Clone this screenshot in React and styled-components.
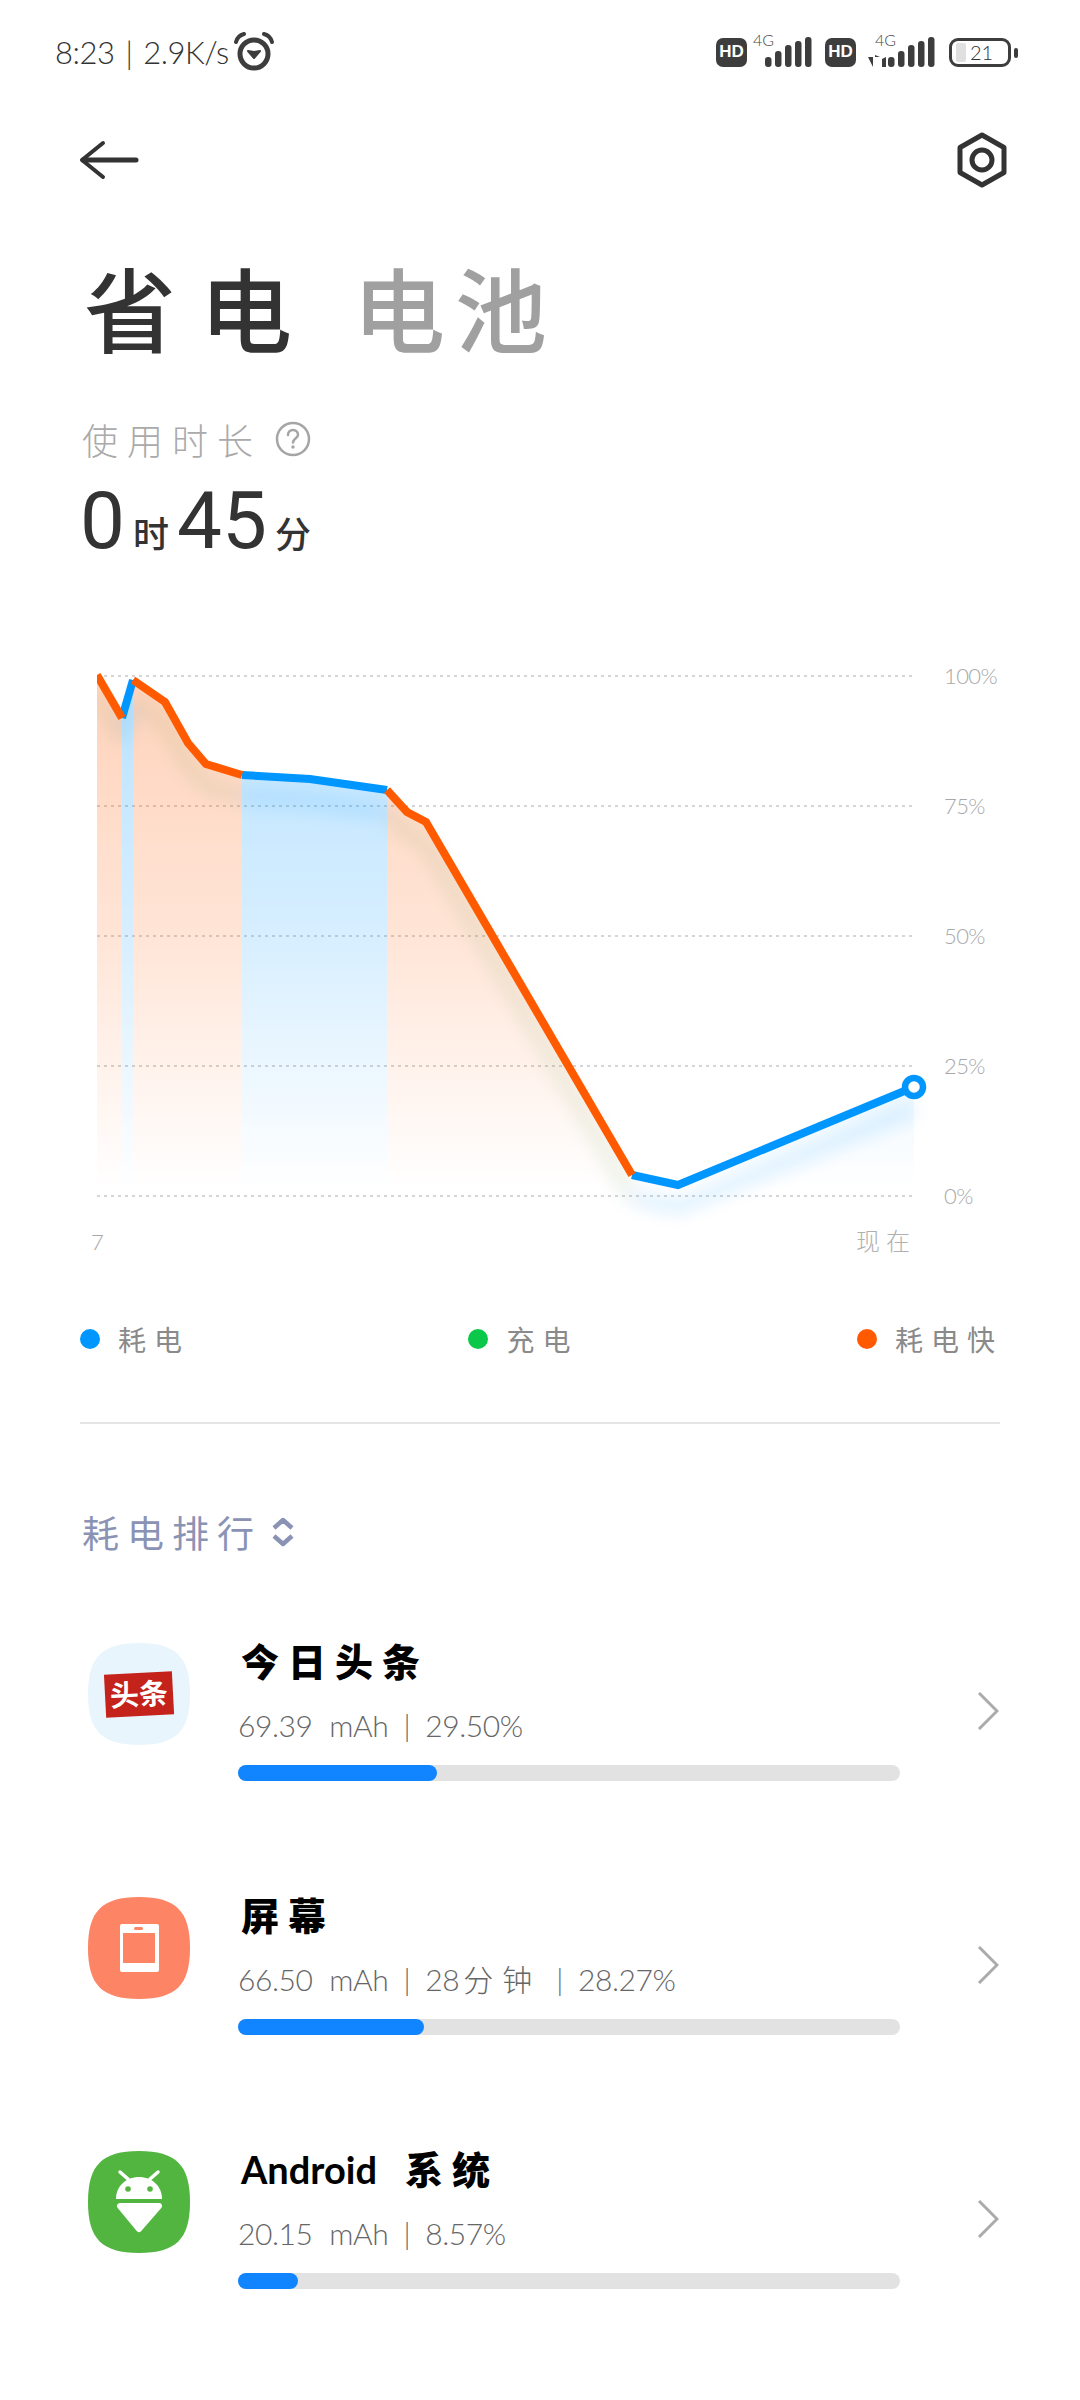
import React from 'react';
import styled, { createGlobalStyle } from 'styled-components';

const CJK = '"Noto Sans CJK SC", sans-serif';
const THIN = `Lato, "Noto Sans CJK SC", sans-serif`;

const GlobalStyle = createGlobalStyle`
  html, body {
    margin: 0;
    padding: 0;
    background: #fff;
  }
`;

const Page = styled.div`
  width: 1080px;
  height: 2400px;
  overflow: hidden;
  background: #fff;
  font-family: ${CJK};
`;

/* status bar */
const StatusBar = styled.div`
  height: 104px;
  padding: 0 62px 0 55px;
  box-sizing: border-box;
  display: flex;
  align-items: center;
  justify-content: space-between;
  color: #333;
`;

const StatusLeft = styled.div`
  display: flex;
  align-items: center;
  gap: 4px;
`;

const StatusText = styled.span`
  font-family: ${THIN};
  font-weight: 300;
  font-size: 31px;
  letter-spacing: -0.5px;
  white-space: pre;
`;

const StatusSep = styled.span`
  margin: 0 11px;
`;

const StatusRight = styled.div`
  display: flex;
  align-items: center;
`;

const HdBadge = styled.span`
  width: 31px;
  height: 29px;
  border-radius: 7px;
  background: #3d3d3d;
  color: #fff;
  font-family: "Liberation Sans", sans-serif;
  font-weight: 700;
  font-size: 17px;
  display: flex;
  align-items: center;
  justify-content: center;
  margin-left: ${p => p.$left || 0}px;
`;

const SignalWrap = styled.div`
  position: relative;
  width: ${p => p.$width}px;
  height: 30px;
  margin-left: ${p => p.$left}px;
`;

const TinyG = styled.span`
  position: absolute;
  left: ${p => p.$x}px;
  top: -5px;
  font-family: ${THIN};
  font-weight: 300;
  font-size: 16px;
  line-height: 16px;
  color: #444;
`;

const SignalSvg = styled.svg`
  display: block;
`;

const Battery = styled.div`
  position: relative;
  margin-left: 14px;
  width: 62px;
  height: 29px;
  box-sizing: border-box;
  border: 3px solid #3d3d3d;
  border-radius: 9px;
  display: flex;
  align-items: center;
  padding-left: 4px;
  margin-right: 7px;

  &::after {
    content: '';
    position: absolute;
    right: -10px;
    top: 7px;
    width: 4px;
    height: 10px;
    border-radius: 2px;
    background: #3d3d3d;
  }
`;

const BatteryLevel = styled.span`
  width: 10px;
  height: 19px;
  background: #e0e0e0;
  border-radius: 2px;
`;

const BatteryText = styled.span`
  margin-left: 4px;
  font-family: ${THIN};
  font-weight: 300;
  font-size: 20px;
  line-height: 20px;
  color: #333;
`;

/* header */
const NavBar = styled.div`
  height: 112px;
  padding: 0 72px 0 79px;
  display: flex;
  align-items: center;
  justify-content: space-between;
`;

const TitleRow = styled.div`
  margin-top: 30px;
  height: 120px;
  padding-left: 84px;
  display: flex;
  align-items: center;
  gap: 61px;
`;

const TitleTab = styled.span`
  font-size: 92px;
  line-height: 120px;
  letter-spacing: ${p => (p.$active ? 24 : 10)}px;
  margin-right: ${p => (p.$active ? -24 : -10)}px;
  font-weight: 500;
  color: ${p => (p.$active ? '#333' : '#a0a0a0')};
`;

const UsageRow = styled.div`
  margin-top: 48px;
  height: 50px;
  padding-left: 82px;
  display: flex;
  align-items: center;
  gap: 13px;
`;

const UsageLabel = styled.span`
  font-size: 36px;
  font-weight: 300;
  letter-spacing: 9px;
  color: #aaa;
`;

const Duration = styled.div`
  margin-top: 12px;
  height: 90px;
  padding-left: 80px;
  display: flex;
  align-items: baseline;
  gap: 8px;
  color: #333;
`;

const DurationValue = styled.span`
  font-family: Roboto, sans-serif;
  font-size: 80px;
  line-height: 90px;
`;

const DurationUnit = styled.span`
  font-size: 36px;
  font-weight: 500;
`;

/* chart */
const ChartSvg = styled.svg`
  display: block;
  margin-top: 74px;
`;

const AxisLabel = styled.text`
  font-family: ${THIN};
  font-weight: 300;
  font-size: 22px;
  letter-spacing: -0.6px;
  fill: #a8a8a8;
`;

const AxisCjk = styled.text`
  font-family: ${CJK};
  font-weight: 300;
  font-size: 24px;
  letter-spacing: 6px;
  fill: #b0b0b0;
`;

/* legend */
const Legend = styled.div`
  margin-top: 39px;
  height: 40px;
  padding: 0 85px 0 80px;
  display: flex;
  align-items: center;
  justify-content: space-between;
`;

const LegendItem = styled.div`
  display: flex;
  align-items: center;
  gap: 18px;
`;

const LegendDot = styled.span`
  width: 20px;
  height: 20px;
  border-radius: 50%;
  background: ${p => p.$color};
`;

const LegendText = styled.span`
  font-size: 28px;
  letter-spacing: 8px;
  margin-right: -8px;
  color: #8a8a8a;
`;

const Divider = styled.div`
  margin: 63px 80px 0;
  height: 2px;
  background: #e5e5e5;
`;

/* ranking */
const RankHeading = styled.div`
  margin-top: 83px;
  height: 50px;
  padding-left: 82px;
  display: flex;
  align-items: center;
  gap: 9px;
`;

const RankText = styled.span`
  font-size: 37px;
  letter-spacing: 8px;
  color: #8b93b5;
`;

const RankList = styled.div`
  margin-top: 73px;
  display: grid;
  grid-auto-rows: 151px;
  row-gap: 103px;
`;

const Row = styled.div`
  padding-left: 88px;
  display: grid;
  grid-template-columns: 102px 662px 20px;
  column-gap: 48px;
  align-items: start;
`;

const AppIcon = styled.svg`
  display: block;
  margin-top: 13px;
`;

const RowBody = styled.div`
  display: flex;
  flex-direction: column;
`;

const RowTitle = styled.div`
  height: 60px;
  line-height: 60px;
  padding-left: 3px;
  font-size: 38px;
  font-weight: 900;
  letter-spacing: 9px;
  color: #000;
  white-space: pre;
`;

const LatinName = styled.span`
  font-family: Lato, sans-serif;
  font-weight: 700;
  font-size: 38px;
  letter-spacing: 0;
  margin-right: 28px;
`;

const RowSub = styled.div`
  margin-top: 12px;
  height: 46px;
  line-height: 46px;
  font-family: ${THIN};
  font-size: 30px;
  font-weight: 300;
  word-spacing: 9px;
  letter-spacing: -0.4px;
  color: #666;
  white-space: pre;
`;

const SubSep = styled.span`
  margin: 0 15px;
`;

const WideCjk = styled.span`
  letter-spacing: 9px;
  margin-left: 4px;
`;

const Track = styled.div`
  margin-top: 17px;
  height: 16px;
  border-radius: 8px;
  background: #e2e2e2;
`;

const Fill = styled.div`
  height: 100%;
  border-radius: 8px;
  background: #1185ff;
  width: ${p => p.$width}px;
`;

const Chevron = styled.svg`
  display: block;
  align-self: center;
  margin-top: 10px;
  margin-left: 29px;
`;

const POINTS = [
  [97, 675], [122, 718], [133, 680], [165, 702], [188, 743], [206, 764], [242, 775],
  [310, 779], [387, 790], [407, 812], [426, 822], [632, 1175], [678, 1185], [914, 1087],
];

// line colour changes with the state of the phone
const SEGMENTS = [
  { from: 1, to: 2, kind: 'blue' },
  { from: 6, to: 8, kind: 'blue' },
  { from: 11, to: 13, kind: 'blue' },
  { from: 0, to: 1, kind: 'orange' },
  { from: 2, to: 6, kind: 'orange' },
  { from: 8, to: 11, kind: 'orange' },
];

const LINE_COLORS = { blue: '#0096ff', orange: '#ff5a00' };
const SHADOW_COLORS = { blue: '#0096ff', orange: '#6f9d52' };
const GRID_Y = [676, 806, 936, 1066, 1196];
const GRID_LABELS = ['100%', '75%', '50%', '25%', '0%'];

const toPoints = seg => POINTS.slice(seg.from, seg.to + 1).map(p => p.join(',')).join(' ');

function BatteryChart() {
  const area = `97,1190 ${POINTS.map(p => p.join(',')).join(' ')} 914,1190`;
  return (
    <ChartSvg width="1080" height="640" viewBox="0 640 1080 640">
      <defs>
        <linearGradient id="fadeBlue" gradientUnits="userSpaceOnUse" x1="0" y1="676" x2="0" y2="1190">
          <stop offset="0" stopColor="#0096ff" stopOpacity="0.27" />
          <stop offset="0.5" stopColor="#0096ff" stopOpacity="0.16" />
          <stop offset="1" stopColor="#0096ff" stopOpacity="0" />
        </linearGradient>
        <linearGradient id="fadeOrange" gradientUnits="userSpaceOnUse" x1="0" y1="676" x2="0" y2="1190">
          <stop offset="0" stopColor="#ff5a00" stopOpacity="0.27" />
          <stop offset="0.5" stopColor="#ff5a00" stopOpacity="0.16" />
          <stop offset="1" stopColor="#ff5a00" stopOpacity="0" />
        </linearGradient>
        <clipPath id="areaClip">
          <polygon points={area} />
        </clipPath>
        <clipPath id="plotClip">
          <rect x="97" y="640" width="900" height="640" />
        </clipPath>
        <filter id="soft" x="-30%" y="-30%" width="160%" height="160%">
          <feGaussianBlur stdDeviation="9" />
        </filter>
      </defs>

      {GRID_Y.map((y, i) => (
        <g key={y}>
          <line x1="97" x2="914" y1={y} y2={y} stroke="#c8c8c8" strokeWidth="1.5" strokeDasharray="3 4" />
          <AxisLabel x="944" y={y + 8}>{GRID_LABELS[i]}</AxisLabel>
        </g>
      ))}

      <g clipPath="url(#areaClip)">
        {SEGMENTS.map(seg => (
          <rect
            key={seg.from}
            x={POINTS[seg.from][0]}
            y="660"
            width={POINTS[seg.to][0] - POINTS[seg.from][0]}
            height="540"
            fill={seg.kind === 'blue' ? 'url(#fadeBlue)' : 'url(#fadeOrange)'}
          />
        ))}
      </g>

      <g clipPath="url(#plotClip)">
        <g filter="url(#soft)" transform="translate(0 22)" opacity="0.16">
          {SEGMENTS.map(seg => (
            <polyline key={seg.from} points={toPoints(seg)} fill="none" stroke={SHADOW_COLORS[seg.kind]} strokeWidth="12" />
          ))}
        </g>
        {SEGMENTS.map(seg => (
          <polyline
            key={seg.from}
            points={toPoints(seg)}
            fill="none"
            stroke={LINE_COLORS[seg.kind]}
            strokeWidth="8"
            strokeLinejoin="miter"
          />
        ))}
      </g>

      <circle cx="914" cy="1087" r="9" fill="#fff" stroke="#0096ff" strokeWidth="6.5" />

      <AxisLabel x="91" y="1250">7</AxisLabel>
      <AxisCjk x="856" y="1250">现在</AxisCjk>
    </ChartSvg>
  );
}

const SQUIRCLE = 'M51 0C88 0 102 14 102 51S88 102 51 102 0 88 0 51 14 0 51 0Z';

function ToutiaoIcon() {
  return (
    <AppIcon width="102" height="102" viewBox="0 0 102 102">
      <path d={SQUIRCLE} fill="#e9f5fd" />
      <g transform="rotate(-3 51 51)">
        <rect x="17" y="30" width="68" height="43" fill="#c4231b" />
        <text x="51" y="62" textAnchor="middle" fontFamily={CJK} fontWeight="700" fontSize="29" fill="#fff">头条</text>
      </g>
    </AppIcon>
  );
}

function ScreenIcon() {
  return (
    <AppIcon width="102" height="102" viewBox="0 0 102 102">
      <path d={SQUIRCLE} fill="#fd8465" />
      <rect x="32" y="27" width="39" height="48" rx="2" fill="#fff" />
      <rect x="35" y="36" width="32" height="30" fill="#fd8465" />
      <rect x="46" y="30" width="9" height="3" rx="1.5" fill="#fd8465" />
    </AppIcon>
  );
}

function AndroidIcon() {
  return (
    <AppIcon width="102" height="102" viewBox="0 0 102 102">
      <path d={SQUIRCLE} fill="#52b540" />
      <path d="M28 48C28 35 38 26 51 26S74 35 74 48Z" fill="#fff" />
      <path d="M32 21L40 28M70 21L62 28" stroke="#fff" strokeWidth="3.5" strokeLinecap="round" />
      <circle cx="40" cy="38" r="2.8" fill="#52b540" />
      <circle cx="62" cy="38" r="2.8" fill="#52b540" />
      <path d="M32 55H71L51 78Z" fill="#fff" stroke="#fff" strokeWidth="6" strokeLinejoin="round" />
    </AppIcon>
  );
}

const APPS = [
  {
    name: '今日头条',
    parts: ['69.39 mAh', '29.50%'],
    width: 199,
    Icon: ToutiaoIcon,
  },
  {
    name: '屏幕',
    parts: ['66.50 mAh', <>28<WideCjk>分钟</WideCjk></>, '28.27%'],
    width: 186,
    Icon: ScreenIcon,
  },
  {
    latin: 'Android',
    name: '系统',
    parts: ['20.15 mAh', '8.57%'],
    width: 60,
    Icon: AndroidIcon,
  },
];

function SignalBars({ offset = 0, arrows }) {
  const heights = [10, 16, 22, 26, 30];
  return (
    <SignalSvg width={offset + 47} height="30" viewBox={`0 0 ${offset + 47} 30`}>
      {arrows && <path d="M0 20L5 20V30ZM7 30V18L12 20H7Z M14 22L18 20V30H14Z" fill="#3d3d3d" />}
      {heights.map((h, i) => (
        <rect key={i} x={offset + i * 10} y={30 - h} width="6.5" height={h} rx="3" fill="#3d3d3d" />
      ))}
    </SignalSvg>
  );
}

export default function App() {
  return (
    <Page>
      <GlobalStyle />
      <StatusBar>
        <StatusLeft>
          <StatusText>8:23<StatusSep>|</StatusSep>2.9K/s</StatusText>
          <svg width="42" height="40" viewBox="0 0 42 40">
            <circle cx="21" cy="22" r="14" fill="none" stroke="#3d3d3d" strokeWidth="5" />
            <path d="M3 10C4 6 7 3 11 2M39 10C38 6 35 3 31 2" fill="none" stroke="#3d3d3d" strokeWidth="4" strokeLinecap="round" />
            <path d="M15 19L21 26L27 19L21 20Z" fill="#3d3d3d" stroke="#3d3d3d" strokeWidth="2" strokeLinejoin="round" />
          </svg>
        </StatusLeft>
        <StatusRight>
          <HdBadge>HD</HdBadge>
          <SignalWrap $width={47} $left={18}>
            <TinyG $x={-12}>4G</TinyG>
            <SignalBars />
          </SignalWrap>
          <HdBadge $left={13}>HD</HdBadge>
          <SignalWrap $width={67} $left={12}>
            <TinyG $x={7}>4G</TinyG>
            <SignalBars offset={20} arrows />
          </SignalWrap>
          <Battery>
            <BatteryLevel />
            <BatteryText>21</BatteryText>
          </Battery>
        </StatusRight>
      </StatusBar>

      <NavBar>
        <svg width="60" height="40" viewBox="0 0 60 40">
          <path d="M24 3L3 20L24 37" fill="none" stroke="#333" strokeWidth="4" strokeLinecap="round" strokeLinejoin="round" />
          <path d="M4 20H57" stroke="#333" strokeWidth="5" strokeLinecap="round" />
        </svg>
        <svg width="52" height="56" viewBox="0 0 52 56">
          <path d="M26 3L48 15.5V40.5L26 53L4 40.5V15.5Z" fill="none" stroke="#333" strokeWidth="5" strokeLinejoin="round" />
          <circle cx="26" cy="28" r="10" fill="none" stroke="#333" strokeWidth="5" />
        </svg>
      </NavBar>

      <TitleRow>
        <TitleTab $active>省电</TitleTab>
        <TitleTab>电池</TitleTab>
      </TitleRow>

      <UsageRow>
        <UsageLabel>使用时长</UsageLabel>
        <svg width="36" height="36" viewBox="0 0 36 36">
          <circle cx="18" cy="18" r="16" fill="none" stroke="#a5a5a5" strokeWidth="2.5" />
          <path d="M13 14C13 11 15 9 18 9S23 11 23 14C23 17 18 17.5 18 21.5" fill="none" stroke="#a5a5a5" strokeWidth="2.5" strokeLinecap="round" />
          <circle cx="18" cy="26" r="1.7" fill="#a5a5a5" />
        </svg>
      </UsageRow>

      <Duration>
        <DurationValue>0</DurationValue>
        <DurationUnit>时</DurationUnit>
        <DurationValue>45</DurationValue>
        <DurationUnit>分</DurationUnit>
      </Duration>

      <BatteryChart />

      <Legend>
        <LegendItem>
          <LegendDot $color="#0096ff" />
          <LegendText>耗电</LegendText>
        </LegendItem>
        <LegendItem>
          <LegendDot $color="#0bc84a" />
          <LegendText>充电</LegendText>
        </LegendItem>
        <LegendItem>
          <LegendDot $color="#ff5a00" />
          <LegendText>耗电快</LegendText>
        </LegendItem>
      </Legend>

      <Divider />

      <RankHeading>
        <RankText>耗电排行</RankText>
        <svg width="24" height="30" viewBox="0 0 24 30">
          <path d="M3 11L12 3L21 11M3 19L12 27L21 19" fill="none" stroke="#8b93b5" strokeWidth="4.5" strokeLinejoin="round" />
        </svg>
      </RankHeading>

      <RankList>
        {APPS.map(({ latin, name, parts, width, Icon }) => (
          <Row key={name}>
            <Icon />
            <RowBody>
              <RowTitle>
                {latin && <LatinName>{latin}</LatinName>}
                {name}
              </RowTitle>
              <RowSub>
                {parts.map((part, i) => (
                  <React.Fragment key={i}>
                    {i > 0 && <SubSep>|</SubSep>}
                    {part}
                  </React.Fragment>
                ))}
              </RowSub>
              <Track>
                <Fill $width={width} />
              </Track>
            </RowBody>
            <Chevron width="22" height="38" viewBox="0 0 22 38">
              <path d="M2 1L20 19L2 37" fill="none" stroke="#ababab" strokeWidth="3" />
            </Chevron>
          </Row>
        ))}
      </RankList>
    </Page>
  );
}
